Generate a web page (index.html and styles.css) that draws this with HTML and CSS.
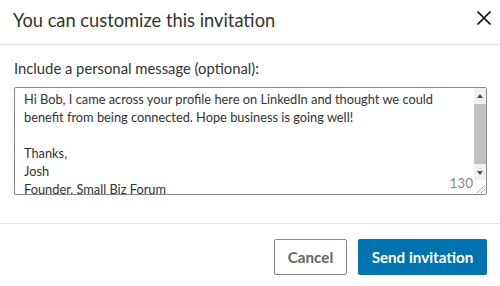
FILE: index.html
```html
<!DOCTYPE html>
<html lang="en">
<head>
    <meta charset="UTF-8">
    <meta name="viewport" content="width=device-width, initial-scale=1.0">
    <title>Invite</title>
    <link rel="stylesheet" href="styles.css">
</head>
<body>
    <div class="modal">
        <div class="modal-header">
            <h2>You can customize this invitation</h2>
            <button class="close" aria-label="Dismiss">
                <svg width="16" height="16" viewBox="0 0 16 16">
                    <path d="M1.5 1.5 L14.5 14.5 M14.5 1.5 L1.5 14.5" stroke="#000" stroke-width="1.6" fill="none"/>
                </svg>
            </button>
        </div>

        <div class="modal-body">
            <label class="field-label">Include a personal message (optional):</label>
            <div class="message-box">
                <div class="message-text">Hi Bob, I came across your profile here on LinkedIn and thought we could benefit from being connected. Hope business is going well!<br><br>Thanks,<br>Josh<br>Founder, Small Biz Forum</div>
                <div class="scrollbar">
                    <div class="arrow arrow-up"></div>
                    <div class="track"><div class="thumb"></div></div>
                    <div class="arrow arrow-down"></div>
                    <div class="grip">
                        <svg width="12" height="12" viewBox="0 0 12 12">
                            <path d="M3 11 L11 3 M7 11 L11 7" stroke="#aaa" stroke-width="1" fill="none"/>
                        </svg>
                    </div>
                </div>
                <span class="counter">130</span>
            </div>
        </div>

        <div class="modal-footer">
            <button class="btn btn-secondary">Cancel</button>
            <button class="btn btn-primary">Send invitation</button>
        </div>
    </div>
</body>
</html>
```
FILE: styles.css
```css
*{
    margin: 0;
    padding: 0;
    box-sizing: border-box;
}
body {
    font-family: Lato, 'Open Sans', Arial, sans-serif;
    color: #333;
    background-color: #fff;
    width: 500px;
    height: 286px;
    overflow: hidden;
}
.modal-header {
    height: 45px;
    display: flex;
    justify-content: space-between;
    align-items: center;
    padding: 0 8px 4px 13px;
    border-bottom: 1px solid #e1e1e1;
}
.modal-header h2 {
    font-size: 18.3px;
    font-weight: 400;
    color: #333;
}
.close {
    border: none;
    background: none;
    width: 16px;
    height: 16px;
    margin-bottom: 4px;
    display: flex;
}
.modal-body {
    height: 178px;
    padding: 13px 13px 0 14px;
}
.field-label {
    display: block;
    font-size: 14.8px;
    color: #333;
    line-height: 20px;
}
.message-box {
    position: relative;
    margin-top: 9px;
    height: 108px;
    display: flex;
    border: 1px solid #888;
    border-radius: 2px;
}
.message-text {
    flex: 1;
    overflow: hidden;
    padding: 2px 10px 0 9px;
    font-size: 12.8px;
    line-height: 18px;
    color: #333;
}
.scrollbar {
    width: 12px;
    display: flex;
    flex-direction: column;
    background: #f0f0f0;
}
.arrow {
    height: 15px;
    display: flex;
    justify-content: center;
    align-items: center;
}
.arrow::before {
    content: "";
    border-left: 3.5px solid transparent;
    border-right: 3.5px solid transparent;
}
.arrow-up::before {
    border-bottom: 4px solid #505050;
}
.arrow-down::before {
    border-top: 4px solid #505050;
}
.track {
    flex: 1;
    padding: 1px 0;
}
.thumb {
    height: 100%;
    background: #c1c1c1;
}
.grip {
    height: 14px;
    background: #fff;
    display: flex;
    align-items: flex-end;
}
.counter {
    position: absolute;
    right: 13px;
    bottom: 3px;
    font-size: 13.5px;
    color: #888;
}
.modal-footer {
    border-top: 1px solid #e1e1e1;
    display: flex;
    justify-content: flex-end;
    gap: 11px;
    padding: 15px 13px 0 0;
}
.btn {
    height: 36px;
    font-family: inherit;
    font-size: 15.2px;
    font-weight: 700;
    border-radius: 2px;
    cursor: pointer;
}
.btn-secondary {
    width: 73px;
    background: #fff;
    color: #666;
    border: 1px solid #888;
}
.btn-primary {
    width: 129px;
    background: #0073b1;
    color: #fff;
    border: none;
}
```
